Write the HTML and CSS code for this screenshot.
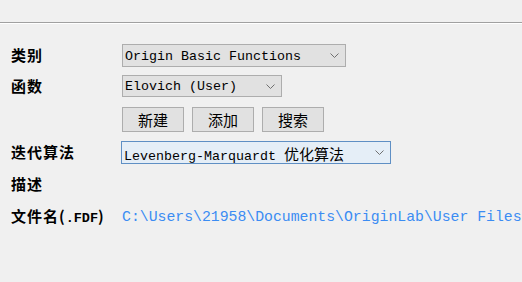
FILE: index.html
```html
<!DOCTYPE html>
<html lang="zh-CN">
<head>
    <meta charset="UTF-8">
    <title>拟合函数</title>
    <link rel="stylesheet" href="styles.css">
</head>
<body>

<div class="topbar"></div>

<div class="form">
    <div class="row r1">
        <span class="label">类别</span>
        <div class="combo w1">
            <span class="en">Origin Basic Functions</span>
            <svg class="arrow" width="9" height="5" viewBox="0 0 9 5"><path d="M0.5 0.5 L4.5 4.5 L8.5 0.5" fill="none" stroke="#707070" stroke-width="1"/></svg>
        </div>
    </div>
    <div class="row r2">
        <span class="label">函数</span>
        <div class="combo w2">
            <span class="en">Elovich (User)</span>
            <svg class="arrow" width="9" height="5" viewBox="0 0 9 5"><path d="M0.5 0.5 L4.5 4.5 L8.5 0.5" fill="none" stroke="#707070" stroke-width="1"/></svg>
        </div>
    </div>
    <div class="row r3">
        <span class="label"></span>
        <div class="btns">
            <button class="btn">新建</button>
            <button class="btn">添加</button>
            <button class="btn">搜索</button>
        </div>
    </div>
    <div class="row r4">
        <span class="label">迭代算法</span>
        <div class="combo w3 hot">
            <span class="en">Levenberg-Marquardt <span class="cn">优化算法</span></span>
            <svg class="arrow" width="9" height="5" viewBox="0 0 9 5"><path d="M0.5 0.5 L4.5 4.5 L8.5 0.5" fill="none" stroke="#707070" stroke-width="1"/></svg>
        </div>
    </div>
    <div class="row r5">
        <span class="label">描述</span>
    </div>
    <div class="row r6">
        <span class="label">文件名(<span class="lat">.FDF</span>)</span>
        <span class="path">C:\Users\21958\Documents\OriginLab\User Files</span>
    </div>
</div>

</body>
</html>
```

FILE: styles.css
```css
*{
    margin: 0px;
    padding: 0px;
}
body{
    width: 522px;
    height: 282px;
    overflow: hidden;
    background-color: #f0f0f0;
    font-family: "Noto Sans CJK SC", sans-serif;
    font-size: 15px;
    color: #000;
}
.topbar{
    height: 22px;
    border-bottom: 1px solid #a0a0a0;
    box-shadow: 0 1px 0 #ffffff;
}
.form{
    padding: 21px 0 0 11px;
    display: flex;
    flex-direction: column;
}
.row{
    display: flex;
    align-items: center;
    white-space: nowrap;
}
.label{
    width: 111px;
    flex: none;
    font-weight: bold;
    font-size: 15px;
    letter-spacing: 1px;
    padding-bottom: 2px;
}
.label .lat{
    font-family: "Liberation Mono", monospace;
    font-size: 13.5px;
    letter-spacing: 0;
}
.r1{ height: 23px; }
.r2{ height: 22px; margin-top: 8px; }
.r3{ height: 25px; margin-top: 10px; }
.r4{ height: 23px; margin-top: 9px; }
.r5{ height: 23px; margin-top: 9px; }
.r6{ height: 23px; margin-top: 9px; }

.combo{
    height: 100%;
    box-sizing: border-box;
    border: 1px solid #adadad;
    background-color: #e1e1e1;
    display: flex;
    align-items: center;
    justify-content: space-between;
    padding: 0 6px 0 2px;
}
.combo.hot{
    border-color: #5f8fc4;
    background-color: #e5eef7;
}
.w1{ width: 224px; }
.w2{ width: 160px; }
.w3{ width: 270px; margin-left: -1px; }
.en{
    font-family: "Liberation Mono", monospace;
    font-size: 13.33px;
    padding-top: 1px;
}
.cn{
    font-family: "Noto Sans CJK SC", sans-serif;
    font-size: 15px;
}
.arrow{
    flex: none;
}
.btns{
    display: flex;
    gap: 8px;
    height: 100%;
}
.btn{
    width: 62px;
    height: 100%;
    border: 1px solid #adadad;
    background-color: #e1e1e1;
    font-family: "Noto Sans CJK SC", sans-serif;
    font-size: 15px;
    color: #000;
}
.path{
    font-family: "Liberation Mono", monospace;
    font-size: 14.8px;
    color: #3b8cf3;
    padding-top: 1px;
}
```
